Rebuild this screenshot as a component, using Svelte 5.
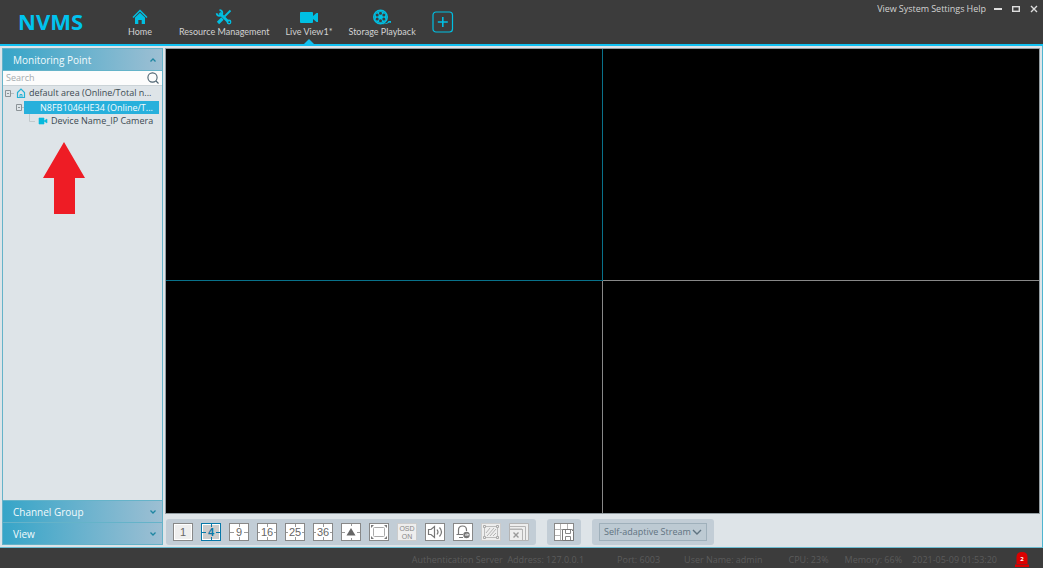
<script lang="ts">
    let tabs = [
        { id: "home", label: "Home" },
        { id: "resource", label: "Resource Management" },
        { id: "live", label: "Live View1*" },
        { id: "playback", label: "Storage Playback" },
    ];
    let activeTab = "live";

    const menus = ["View", "System", "Settings", "Help"];
    const layouts = ["1", "4", "9", "16", "25", "36"];
    let layout = "4";

    const tools = [
        { id: "custom", label: "Custom layout" },
        { id: "full", label: "Full screen" },
        { id: "osd", label: "OSD on", off: true },
        { id: "sound", label: "Sound" },
        { id: "alarm", label: "Alarm output" },
        { id: "region", label: "Region", off: true },
        { id: "close", label: "Close all", off: true },
    ];

    let search = "";
    let selected = "N8FB1046HE34";
    let stream = "Self-adaptive Stream";
</script>

<div class="app">
    <header>
        <div class="logo">NVMS</div>
        <nav>
            {#each tabs as tab}
                <button class="tab" class:active={activeTab == tab.id} on:click={() => (activeTab = tab.id)}>
                    <svg width="20" height="18" viewBox="0 0 20 18">
                        {#if tab.id == "home"}
                            <path d="M3 9.500 10 2.500l7 7" fill="none" stroke="#00bfe2" stroke-width="1.500" />
                            <path d="M5 9.500 10 4.800l5 4.700V16h-3.300v-4H8.300v4H5z" fill="#00bfe2" />
                        {:else if tab.id == "resource"}
                            <path d="M5.500 5 15 14.500" stroke="#00bfe2" stroke-width="2.600" />
                            <path d="M5.500 2.200a2.800 2.800 0 1 1-2.800 3" fill="none" stroke="#00bfe2" stroke-width="1.800" />
                            <circle cx="15" cy="14" r="2.400" fill="#00bfe2" />
                            <path d="M16.500 2.500 10.500 8.500" stroke="#00bfe2" stroke-width="1.800" />
                            <path d="M8.500 10.500 4 15" stroke="#00bfe2" stroke-width="3.200" />
                            <circle cx="15.200" cy="14.200" r=".9" fill="#3c3c3c" />
                        {:else if tab.id == "live"}
                            <rect x="1" y="4" width="13" height="11" rx="1" fill="#00bfe2" />
                            <path d="M14 8 17.500 5H19v9h-1.500L14 11z" fill="#00bfe2" />
                        {:else}
                            <circle cx="8.500" cy="9" r="6.700" fill="none" stroke="#00bfe2" stroke-width="1.600" />
                            <circle cx="8.500" cy="9" r="6" fill="#00bfe2" />
                            <g fill="#3c3c3c">
                                <circle cx="8.500" cy="5.200" r="1.500" />
                                <circle cx="11.800" cy="7.100" r="1.500" />
                                <circle cx="11.800" cy="10.900" r="1.500" />
                                <circle cx="8.500" cy="12.800" r="1.500" />
                                <circle cx="5.200" cy="10.900" r="1.500" />
                                <circle cx="5.200" cy="7.100" r="1.500" />
                            </g>
                            <path d="M11 15.700q4.500 0 5.500-2.700H19v2l-1.500-.5q-2 1.800-6.500 1.800z" fill="#00bfe2" />
                        {/if}
                    </svg>
                    <span>{tab.label}</span>
                </button>
            {/each}
            <button class="add" aria-label="New tab">
                <svg width="22" height="22" viewBox="0 0 22 22" fill="none" stroke="#00bfe2">
                    <rect x="1" y="1" width="19.500" height="20" rx="3" stroke-width="1.200" />
                    <path d="M10.800 6v10M5.800 11h10" stroke-width="1.600" />
                </svg>
            </button>
        </nav>
        <div class="menus">
            {#each menus as menu}
                <button>{menu}</button>
            {/each}
        </div>
        <div class="window-buttons">
            <button aria-label="Minimize"><svg width="8" height="8"><path d="M0 4h8" stroke="#ddd" stroke-width="2" /></svg></button>
            <button aria-label="Maximize"><svg width="8" height="8"><rect x=".7" y="1.700" width="6.600" height="4.600" fill="none" stroke="#ddd" stroke-width="1.400" /></svg></button>
            <button aria-label="Close"><svg width="8" height="8"><path d="M1 1l6 6M7 1 1 7" stroke="#ddd" stroke-width="1.400" /></svg></button>
        </div>
    </header>

    <main>
        <aside>
            <button class="section">
                <span>Monitoring Point</span>
                <svg width="8" height="6"><path d="M1.500 4.500 4 2l2.500 2.500" /></svg>
            </button>
            <div class="search">
                <input type="text" placeholder="Search" aria-label="Search" bind:value={search} />
                <svg width="12" height="12" viewBox="0 0 12 12" fill="none" stroke="#4c6270" stroke-width="1.100">
                    <circle cx="5.500" cy="5.500" r="4.600" />
                    <path d="M9 9l2.500 2.500" />
                </svg>
            </div>
            <div class="tree">
                <div class="row">
                    <svg class="toggle" width="10" height="9" fill="none" stroke="#8b9397"><path d="M.5 1.500h5v6h-5zM2 4.500h2" /><path d="M6 4.500h3" stroke="#b7bfc3" /></svg>
                    <svg class="icon" width="12" height="12" fill="none" stroke="#25b2d6"><path d="M2.500 5.500 6 2l3.500 3.500v5h-7z" stroke-width="1.200" /><path d="M5 10V7.500h2V10" /></svg>
                    <button class="node">default area (Online/Total n...</button>
                </div>
                <div class="row level1">
                    <svg class="toggle" width="8" height="9" fill="none" stroke="#8b9397"><path d="M.5 1.500h5v6h-5zM2 4.500h2" /><path d="M6 4.500h2" stroke="#b7bfc3" /></svg>
                    <button class="node device" class:selected={selected == "N8FB1046HE34"} on:click={() => (selected = "N8FB1046HE34")}>N8FB1046HE34 (Online/T...</button>
                </div>
                <div class="row level2">
                    <svg width="8" height="14" fill="none" stroke="#c1c9cd"><path d="M.5 0v7.500H6" /></svg>
                    <svg class="icon" width="10" height="8"><path d="M1 1h5v6H1zM6 4l3-2v4z" fill="#05b9dd" stroke="#05b9dd" stroke-width=".6" /></svg>
                    <button class="node">Device Name_IP Camera</button>
                </div>
            </div>
            <svg class="arrow" width="44" height="74" viewBox="0 0 44 74"><path d="M22 1 43 37H33v36H12V37H1z" fill="#ee1c25" /></svg>
            <div class="sections">
                <button class="section">
                    <span>Channel Group</span>
                    <svg width="8" height="6"><path d="M1.500 1.500 4 4l2.500-2.500" /></svg>
                </button>
                <button class="section">
                    <span>View</span>
                    <svg width="8" height="6"><path d="M1.500 1.500 4 4l2.500-2.500" /></svg>
                </button>
            </div>
        </aside>

        <section class="content">
            <div class="videos">
                <div class="video current"></div>
                <div class="video"></div>
                <div class="video"></div>
                <div class="video"></div>
            </div>
            <div class="toolbar">
                <div class="group">
                    {#each layouts as n}
                        <button class="tool" class:on={layout == n} on:click={() => (layout = n)}>
                            <svg width="20" height="18" viewBox="0 0 20 18">
                                <rect class="frame" x=".5" y=".5" width="19" height="17" />
                                {#if n == "1"}
                                    <rect x="2" y="2" width="16" height="14" fill="#eee" />
                                {:else}
                                    {#if n == "4"}<rect x="2" y="2" width="16" height="14" fill="#ccc" />{/if}
                                    <path class="ticks" d="M10.500 1v3M10.500 14v3" />
                                    <path class="ticks" d={n.length == 1 ? "M1 9.500h4M15 9.500h4" : "M1 9.500h2M17 9.500h2"} />
                                {/if}
                                <text x="10" y="13" text-anchor="middle">{n}</text>
                            </svg>
                        </button>
                    {/each}
                    {#each tools as tool}
                        <button class="tool" class:off={tool.off} aria-label={tool.label}>
                            <svg width="20" height="18" viewBox="0 0 20 18">
                                {#if tool.id != "close"}
                                    <rect class="frame" x=".5" y=".5" width="19" height="17" />
                                {/if}
                                {#if tool.id == "custom"}
                                    <path class="ticks" d="M10.500 1v2M10.500 15v2M1 9.500h3M16 9.500h3" />
                                    <path d="M10 5l4.500 7.500h-9z" fill="#666" />
                                {:else if tool.id == "full"}
                                    <rect x="4.500" y="4.500" width="11" height="9" rx="1" fill="#fff" stroke="#aaa" />
                                    <path d="M2 5V2h3zM18 5V2h-3zM2 13v3h3zM18 13v3h-3z" fill="#777" />
                                {:else if tool.id == "osd"}
                                    <text class="osd" x="10" y="8" text-anchor="middle">OSD</text>
                                    <text class="osd" x="10" y="16" text-anchor="middle">ON</text>
                                {:else if tool.id == "sound"}
                                    <path d="M3.500 6.500H6L9.500 3.500v11L6 11.500H3.500zM12 6.500q2 2.500 0 5M14.500 4.500q4 4.500 0 9" fill="none" stroke="#777" stroke-width="1.200" />
                                {:else if tool.id == "alarm"}
                                    <path d="M5.500 11.500V7q0-4 4-4t4 4v1M3.500 11.500H10M6 14.500h4" fill="none" stroke="#777" stroke-width="1.200" />
                                    <circle cx="13.500" cy="12" r="3.200" fill="#777" />
                                    <path d="M12 12h3.500M14 10.500l1.500 1.500" fill="none" stroke="#fff" />
                                {:else if tool.id == "region"}
                                    <path d="M3.500 3.500h13v11h-13z" fill="none" stroke="#bbb" />
                                    <path d="M5 10l4-5M6 13l7-8M9 13l6-7M12 13l3-3" stroke="#b4b4b4" />
                                    <path d="M2.500 2.500h2v2h-2zM15.500 2.500h2v2h-2zM2.500 13.500h2v2h-2zM15.500 13.500h2v2h-2z" fill="#eee" stroke="#aaa" />
                                {:else}
                                    <path d="M.5 6V.5h19v17H13V6z" fill="#eee" stroke="#b4b4b4" />
                                    <path d="M1 3.500h15.500V17" fill="none" stroke="#b4b4b4" />
                                    <rect x=".5" y="6.500" width="13" height="11" fill="#eee" stroke="#b4b4b4" />
                                    <path d="M4.500 9.500l5 5M9.500 9.500l-5 5" stroke="#999" stroke-width="1.400" />
                                {/if}
                            </svg>
                        </button>
                    {/each}
                </div>
                <div class="group">
                    <button class="tool" aria-label="Save view">
                        <svg width="20" height="18" viewBox="0 0 20 18">
                            <rect class="frame" x=".5" y=".5" width="19" height="17" />
                            <path d="M6.500 1v16M13.500 1v6M1 6.500h18M1 12.500h6" stroke="#b4b4b4" />
                            <path d="M8.500 6.500h9l2 2v9h-11z" fill="#fff" stroke="#777" />
                            <path d="M11.500 7v3.500h5V7M11.500 17v-3.500h5V17" fill="none" stroke="#888" />
                        </svg>
                    </button>
                </div>
                <div class="group">
                    <div class="stream">
                        <select aria-label="Stream" bind:value={stream}>
                            <option>Self-adaptive Stream</option>
                            <option>Main Stream</option>
                            <option>Sub Stream</option>
                        </select>
                        <svg width="10" height="8"><path d="M1 2l4 4 4-4" fill="none" stroke="#5f7381" stroke-width="1.400" /></svg>
                    </div>
                </div>
            </div>
        </section>
    </main>

    <footer>
        <span class="server">Authentication Server&nbsp; Address: 127.0.0.1</span>
        <span class="port">Port: 6003</span>
        <span class="user">User Name: admin</span>
        <span class="cpu">CPU: 23%</span>
        <span class="memory">Memory: 66%</span>
        <span>2021-05-09 01:53:20</span>
        <button class="alarm" aria-label="2 alarms">
            <svg width="14" height="15" viewBox="0 0 14 15">
                <path d="M1.500 12V5q0-5 5.500-5t5.500 5v7zM0 12.500h14V15H0z" fill="#dc0000" />
                <text x="7" y="9" text-anchor="middle">2</text>
            </svg>
        </button>
    </footer>
</div>

<style>
    :global(body) {
        margin: 0;
    }
    * {
        box-sizing: border-box;
    }
    .app {
        min-height: 100vh;
        display: flex;
        flex-direction: column;
        background: #3c3c3c;
        font-family: "Open Sans", "Noto Sans", sans-serif;
        font-size: 9px;
        line-height: 14px;
        color: #3c4a52;
    }
    button {
        margin: 0;
        padding: 0;
        border: none;
        background: none;
        font: inherit;
        color: inherit;
        cursor: pointer;
    }
    svg {
        display: block;
        flex: none;
    }
    header {
        height: 46px;
        display: flex;
        align-items: flex-start;
        border-bottom: 2px solid #12c0f0;
        color: #d2d2d2;
    }
    .logo {
        width: 117px;
        padding: 8px 0 0 18px;
        font-size: 22px;
        line-height: 26px;
        font-weight: bold;
        color: #00c3ee;
    }
    nav {
        display: flex;
        gap: 16px;
        font-family: Lato, "Open Sans", sans-serif;
    }
    .tab {
        position: relative;
        min-width: 46px;
        height: 44px;
        padding-top: 8px;
        display: flex;
        flex-direction: column;
        align-items: center;
        white-space: nowrap;
    }
    .tab span {
        margin-top: -1px;
    }
    .tab.active::after {
        content: "";
        position: absolute;
        bottom: 0;
        left: 50%;
        margin-left: -5px;
        border: 5px solid transparent;
        border-top: none;
        border-bottom-color: #12c0f0;
    }
    .add {
        align-self: flex-start;
        padding-top: 11px;
    }
    .menus {
        display: flex;
        gap: 2px;
        margin-left: auto;
        padding-top: 2px;
    }
    .window-buttons {
        display: flex;
        gap: 10px;
        padding: 5px 5px 0 8px;
    }
    main {
        flex: 1;
        display: flex;
        gap: 2px;
        padding: 2px;
        background: #dee4e8;
        border-right: 1px solid #4fb5d0;
        border-bottom: 1px solid #6bbbd0;
    }
    aside {
        width: 161px;
        display: flex;
        flex-direction: column;
        border: 1px solid #65b3c9;
    }
    .section {
        width: 100%;
        height: 22px;
        padding: 0 5px 0 10px;
        display: flex;
        align-items: center;
        justify-content: space-between;
        border-bottom: 1px solid #65b3c9;
        background: linear-gradient(to right, #36a5c8, #9dbfd3);
        font-size: 10px;
        color: #f2fafc;
    }
    .section path {
        fill: none;
        stroke: #1f86a2;
        stroke-width: 1.3;
    }
    .search {
        height: 15px;
        padding-right: 3px;
        display: flex;
        align-items: center;
        background: #fcfcfc;
        border-bottom: 1px solid #cbd3d7;
    }
    .search input {
        flex: 1;
        min-width: 0;
        height: 14px;
        padding: 0 0 0 3px;
        border: none;
        outline: none;
        background: none;
        font: inherit;
    }
    .search input::placeholder {
        color: #a5abae;
    }
    .row {
        height: 14px;
        display: flex;
        align-items: center;
        padding: 0 3px 0 2px;
        white-space: nowrap;
    }
    .row .icon {
        margin-right: 2px;
    }
    .level1 {
        padding-left: 13px;
    }
    .level2 {
        padding-left: 26px;
        gap: 1px;
    }
    .node {
        text-align: left;
    }
    .device {
        flex: 1;
        height: 13px;
        line-height: 13px;
        padding-left: 16px;
    }
    .device.selected {
        background: #27b0dc;
        color: #f4fbfd;
    }
    .arrow {
        margin: 13px 0 0 39px;
    }
    .sections {
        margin-top: auto;
        border-top: 1px solid #65b3c9;
    }
    .sections .section:last-child {
        height: 21px;
        border-bottom: none;
    }
    .content {
        flex: 1;
        min-width: 0;
        display: flex;
        flex-direction: column;
    }
    .videos {
        flex: 1;
        display: grid;
        grid-template-columns: 1fr 1fr;
        grid-template-rows: 1fr 1fr;
        border: 1px solid #929ca1;
        background: #000;
    }
    .video {
        border: 0 solid #888;
    }
    .video:nth-child(odd) {
        border-right-width: 1px;
    }
    .video:nth-child(-n + 2) {
        border-bottom-width: 1px;
    }
    .video.current {
        border-color: #08718a;
    }
    .toolbar {
        display: flex;
        gap: 11px;
        padding: 5px 0 0 1px;
    }
    .group {
        height: 26px;
        padding: 0 7px;
        display: flex;
        align-items: center;
        gap: 8px;
        border-radius: 3px;
        background: #c2cdd6;
    }
    .tool .frame {
        fill: #fff;
        stroke: #888;
    }
    .tool .ticks {
        stroke: #999;
        stroke-width: 1;
    }
    .tool text {
        font-family: "Liberation Sans", sans-serif;
        font-size: 11px;
        fill: #666;
    }
    .tool.on .frame,
    .tool.on .ticks {
        stroke: #0878a8;
    }
    .tool.on text {
        fill: #0878a8;
        font-weight: bold;
    }
    .tool.off .frame {
        fill: #eee;
        stroke: #ccc;
    }
    .tool .osd {
        font-size: 7px;
        fill: #888;
    }
    .stream {
        position: relative;
    }
    .stream select {
        display: block;
        width: 108px;
        height: 18px;
        padding: 0 4px;
        appearance: none;
        border: 1px solid #9fb0bb;
        border-radius: 0;
        background: #bdcad3;
        font: inherit;
        color: #5f7381;
    }
    .stream svg {
        position: absolute;
        right: 5px;
        top: 5px;
        pointer-events: none;
    }
    footer {
        height: 20px;
        display: flex;
        justify-content: flex-end;
        align-items: center;
        padding: 3px 14px 0 0;
        white-space: nowrap;
        color: #5b5b5b;
    }
    .server {
        margin-right: 33px;
    }
    .port {
        margin-right: 24px;
    }
    .user {
        margin-right: 26px;
    }
    .cpu {
        margin-right: 16px;
    }
    .memory {
        margin-right: 10px;
    }
    .alarm {
        margin-left: 18px;
    }
    .alarm text {
        font-size: 6px;
        font-weight: bold;
        fill: #fff;
    }
</style>
